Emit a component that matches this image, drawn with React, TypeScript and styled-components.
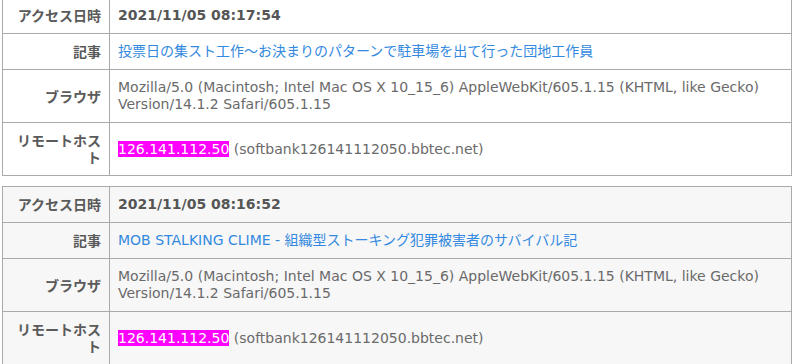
import React from 'react';
import styled, { createGlobalStyle } from 'styled-components';

// Types
interface AccessLog {
  accessedAt: string;
  title: string;
  userAgent: string;
  ip: string;
  host: string;
}

const LOGS: AccessLog[] = [
  {
    accessedAt: '2021/11/05 08:17:54',
    title: '投票日の集スト工作～お決まりのパターンで駐車場を出て行った団地工作員',
    userAgent:
      'Mozilla/5.0 (Macintosh; Intel Mac OS X 10_15_6) AppleWebKit/605.1.15 (KHTML, like Gecko) Version/14.1.2 Safari/605.1.15',
    ip: '126.141.112.50',
    host: 'softbank126141112050.bbtec.net'
  },
  {
    accessedAt: '2021/11/05 08:16:52',
    title: 'MOB STALKING CLIME - 組織型ストーキング犯罪被害者のサバイバル記',
    userAgent:
      'Mozilla/5.0 (Macintosh; Intel Mac OS X 10_15_6) AppleWebKit/605.1.15 (KHTML, like Gecko) Version/14.1.2 Safari/605.1.15',
    ip: '126.141.112.50',
    host: 'softbank126141112050.bbtec.net'
  }
];

const GlobalStyle = createGlobalStyle`
  html, body {
    margin: 0;
    padding: 0;
    background: #fff;
    overflow: hidden;
  }
  body {
    font-family: 'DejaVu Sans', 'Noto Sans CJK JP', sans-serif;
    font-size: 14px;
    color: #666;
  }
`;

const Page = styled.div`
  width: 790px;
  padding: 0 2px;
  margin-top: -3px;
`;

const LogTable = styled.table<{ $shaded: boolean }>`
  width: 100%;
  border-collapse: collapse;
  table-layout: fixed;
  background: ${props => (props.$shaded ? '#f7f7f7' : '#fff')};
  margin-bottom: 10px;
`;

const Label = styled.th`
  width: 90px;
  padding: 9px 8px;
  border: 1px solid #aaa;
  text-align: right;
  vertical-align: middle;
  font-family: 'Noto Sans CJK JP', sans-serif;
  font-weight: 700;
  font-size: 14px;
  line-height: 17px;
  color: #5a5a5a;
`;

const Value = styled.td<{ $strong?: boolean }>`
  padding: 9px 8px;
  border: 1px solid #aaa;
  vertical-align: middle;
  line-height: 17px;
  font-weight: ${props => (props.$strong ? 700 : 400)};
  color: ${props => (props.$strong ? '#555' : '#6a6a6a')};
  word-break: break-word;
`;

const Link = styled.a`
  color: #3389e0;
  text-decoration: none;
`;

const IpMark = styled.span`
  background: #ff00ff;
  color: #fff;
`;

const LogEntry: React.FC<{ log: AccessLog; shaded: boolean }> = ({ log, shaded }) => (
  <LogTable $shaded={shaded}>
    <tbody>
      <tr>
        <Label>アクセス日時</Label>
        <Value $strong>{log.accessedAt}</Value>
      </tr>
      <tr>
        <Label>記事</Label>
        <Value>
          <Link href="#">{log.title}</Link>
        </Value>
      </tr>
      <tr>
        <Label>ブラウザ</Label>
        <Value>{log.userAgent}</Value>
      </tr>
      <tr>
        <Label>リモートホスト</Label>
        <Value>
          <IpMark>{log.ip}</IpMark> ({log.host})
        </Value>
      </tr>
    </tbody>
  </LogTable>
);

const App: React.FC = () => (
  <>
    <GlobalStyle />
    <Page>
      {LOGS.map((log, i) => (
        <LogEntry key={i} log={log} shaded={i % 2 === 1} />
      ))}
    </Page>
  </>
);

export default App;
